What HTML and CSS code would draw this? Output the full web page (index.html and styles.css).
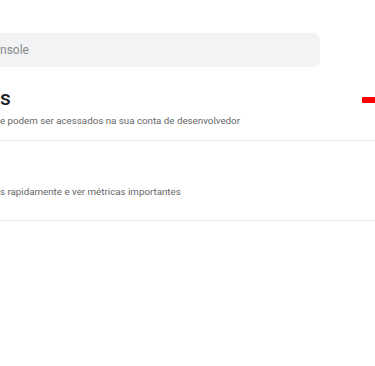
FILE: index.html
```html
<!DOCTYPE html>
<html>
    <head>
        <meta charset="utf-8">
        <title>Play Console</title>
        <link rel="stylesheet" href="styles.css">
    </head>
    <body>
        <div class="search">
            <span class="search-text">nsole</span>
        </div>
        <div class="section">
            <div class="section-head">
                <h1 class="section-title">s</h1>
                <span class="badge"></span>
            </div>
            <div class="section-sub">e podem ser acessados na sua conta de desenvolvedor</div>
        </div>
        <div class="item">
            <div class="item-sub">s rapidamente e ver métricas importantes</div>
        </div>
    </body>
</html>
```

FILE: styles.css
```css
body {
    margin: 0;
    padding: 0;
    background: #fff;
    font-family: Roboto, "Liberation Sans", sans-serif;
    color: #202124;
    overflow: hidden;
}
.search {
    margin-top: 33px;
    width: 320px;
    height: 34px;
    background: #f1f3f4;
    border-radius: 0 7px 7px 0;
    display: flex;
    align-items: center;
}
.search-text {
    font-size: 12px;
    color: #8a8a8a;
}
.section {
    padding-top: 19px;
    border-bottom: 1px solid #ececec;
    height: 54px;
}
.section-head {
    display: flex;
    align-items: center;
    justify-content: space-between;
    height: 24px;
}
.section-title {
    margin: 0;
    font-size: 21px;
    font-weight: 500;
    line-height: 24px;
}
.badge {
    width: 13px;
    height: 6px;
    margin-top: 4px;
    background: #ff0000;
    border-radius: 1px 0 0 1px;
}
.section-sub {
    margin-top: 5px;
    font-size: 9.75px;
    color: #666;
}
.item {
    height: 79px;
    border-bottom: 1px solid #ececec;
    display: flex;
    align-items: flex-end;
}
.item-sub {
    font-size: 9.75px;
    color: #666;
    margin-bottom: 23px;
}
```
